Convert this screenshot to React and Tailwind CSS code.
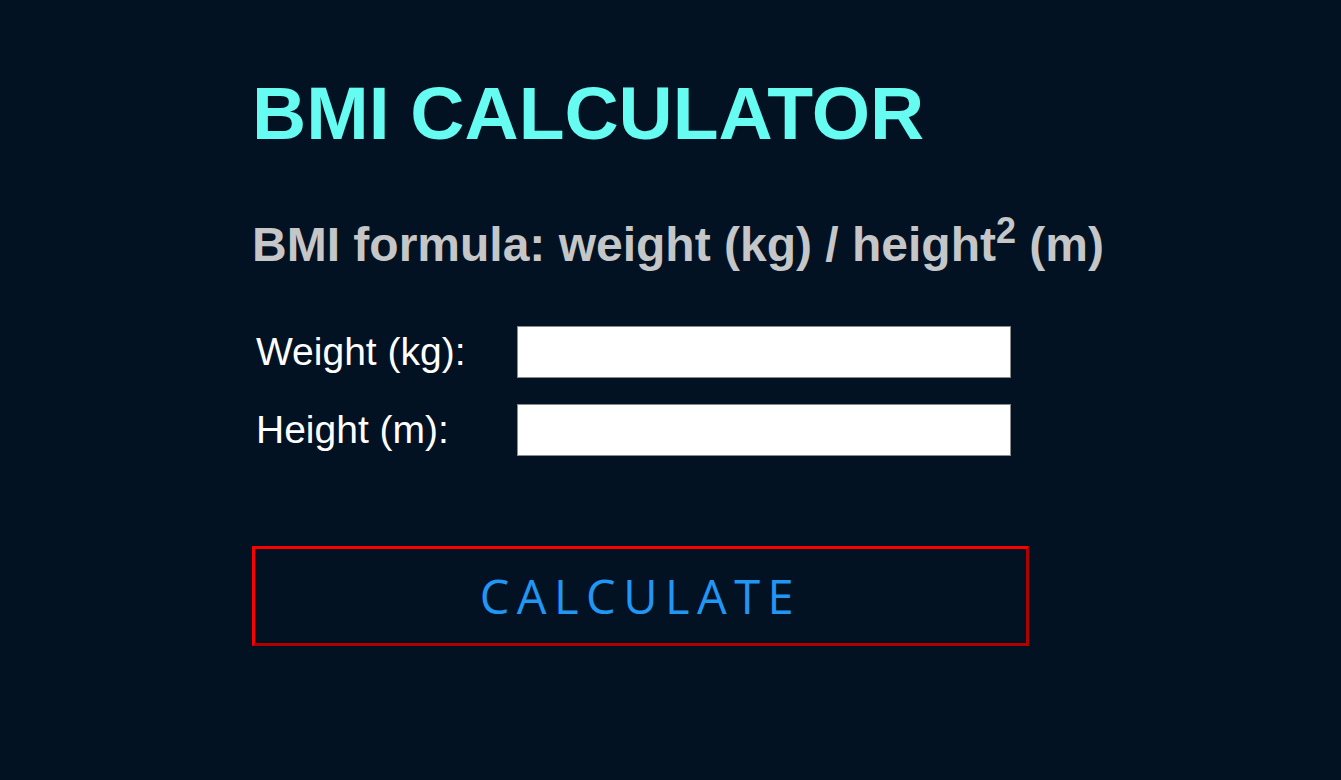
export default function App() {
  return (
    <div className="min-h-screen w-full bg-[#021223] overflow-hidden" style={{ fontFamily: '"Liberation Sans", Arial, sans-serif' }}>
      <div className="pl-[252px] pt-[70px] flex flex-col items-start">
        <h1 className="text-[75px] leading-[86px] font-bold text-[#66fcf1]">BMI CALCULATOR</h1>
        <h2 className="mt-[61px] text-[48px] leading-[55px] font-bold text-[#c5c6c7]">
          BMI formula: weight (kg) / height<sup>2</sup> (m)
        </h2>
        <div className="mt-[54px] ml-[4px] flex flex-col gap-[26px]">
          <div className="flex items-center">
            <label className="w-[261px] text-[39px] leading-[44px] text-white">Weight (kg):</label>
            <input className="w-[494px] h-[52px] bg-white border border-[#8a8a8a] outline-none" />
          </div>
          <div className="flex items-center">
            <label className="w-[261px] text-[39px] leading-[44px] text-white">Height (m):</label>
            <input className="w-[494px] h-[52px] bg-white border border-[#8a8a8a] outline-none" />
          </div>
        </div>
        <button
          className="mt-[90px] w-[777px] h-[100px] border-[3px] border-t-[#ff0000] border-l-[#ff0000] border-r-[#b00000] border-b-[#b00000] bg-transparent text-[#2196f3] text-[47px] tracking-[7.5px] flex items-center justify-center"
          style={{ fontFamily: '"Open Sans", sans-serif' }}
        >
          CALCULATE
        </button>
      </div>
    </div>
  );
}
